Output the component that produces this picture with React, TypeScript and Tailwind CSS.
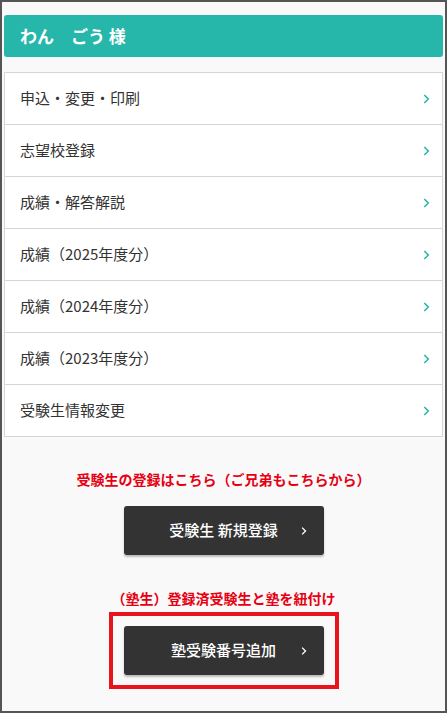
import React from 'react';

{/* マイページ メニュー画面 */}

const menuItems = [
  '申込・変更・印刷',
  '志望校登録',
  '成績・解答解説',
  '成績（2025年度分）',
  '成績（2024年度分）',
  '成績（2023年度分）',
  '受験生情報変更',
];

const Chevron = ({ className }: { className: string }) => (
  <svg viewBox="0 0 8 12" className={className} fill="none" stroke="currentColor" strokeWidth="1.8">
    <path d="M1.5 1.5 L6 6 L1.5 10.5" />
  </svg>
);

const DarkButton = ({ label }: { label: string }) => (
  <button className="relative flex h-[49px] w-[200px] items-center justify-center rounded-[3px] bg-[#333333] text-[15px] font-medium text-white shadow-[0_2px_2px_rgba(0,0,0,0.25)]">
    {label}
    <Chevron className="absolute right-[17px] top-1/2 h-[9px] w-[6px] -translate-y-1/2 text-white" />
  </button>
);

export default function App() {
  return (
    <div
      className="h-[713px] w-[447px] border-2 border-[#555555] bg-[#f9f9f9] px-[2px] pt-[13px]"
      style={{ fontFamily: '"Noto Sans CJK JP", "Noto Sans", sans-serif' }}
    >
      {/* Header */}
      <div className="flex h-[42px] items-center rounded-[3px] bg-[#26b7aa] px-4">
        <h1 className="text-[17px] font-bold text-white">わん　ごう 様</h1>
      </div>

      {/* Menu */}
      <ul className="mt-[15px] border-x border-b border-[#d5d5d5] bg-white">
        {menuItems.map((item) => (
          <li
            key={item}
            className="flex h-[52px] items-center justify-between border-t border-[#d5d5d5] pl-[15px] pr-[12px]"
          >
            <span className="text-[15px] text-[#333333]">{item}</span>
            <Chevron className="h-[12px] w-[7px] text-[#26b7aa]" />
          </li>
        ))}
      </ul>

      {/* Registration */}
      <div className="mt-[32px] flex flex-col items-center">
        <p className="text-[14px] font-bold text-[#e60012]">受験生の登録はこちら（ご兄弟もこちらから）</p>
        <div className="mt-[16px]">
          <DarkButton label="受験生 新規登録" />
        </div>

        <p className="mt-[33px] text-[14px] font-bold text-[#e60012]">（塾生）登録済受験生と塾を紐付け</p>
        <div className="mt-[3px] border-4 border-[#e8141c] px-[11px] py-[10px]">
          <DarkButton label="塾受験番号追加" />
        </div>
      </div>
    </div>
  );
}
